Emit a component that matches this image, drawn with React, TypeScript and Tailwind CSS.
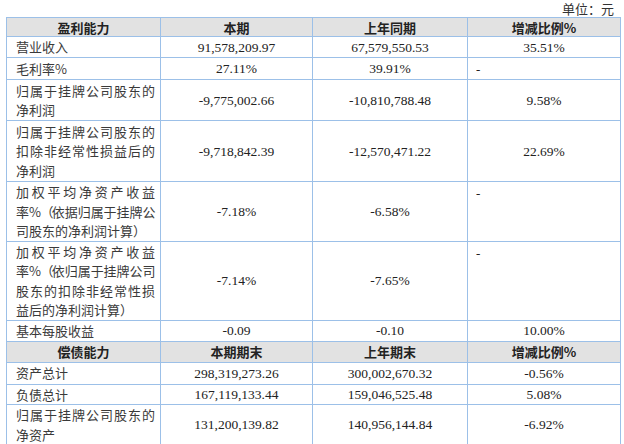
import React from "react";

type Row =
  | { kind: "head"; cells: string[]; h: number }
  | { kind: "data"; label: string[]; v: string[]; h: number; dashTop?: boolean };

const rows: Row[] = [
  { kind: "head", cells: ["盈利能力", "本期", "上年同期", "增减比例%"], h: 19 },
  { kind: "data", label: ["营业收入"], v: ["91,578,209.97", "67,579,550.53", "35.51%"], h: 21 },
  { kind: "data", label: ["毛利率%"], v: ["27.11%", "39.91%", "-"], h: 21, dashTop: true },
  { kind: "data", label: ["归属于挂牌公司股东的", "净利润"], v: ["-9,775,002.66", "-10,810,788.48", "9.58%"], h: 41 },
  {
    kind: "data",
    label: ["归属于挂牌公司股东的", "扣除非经常性损益后的", "净利润"],
    v: ["-9,718,842.39", "-12,570,471.22", "22.69%"],
    h: 61,
  },
  {
    kind: "data",
    label: ["加权平均净资产收益", "率%（依据归属于挂牌公", "司股东的净利润计算）"],
    v: ["-7.18%", "-6.58%", "-"],
    h: 59,
    dashTop: true,
  },
  {
    kind: "data",
    label: ["加权平均净资产收益", "率%（依归属于挂牌公司", "股东的扣除非经常性损", "益后的净利润计算）"],
    v: ["-7.14%", "-7.65%", "-"],
    h: 79,
    dashTop: true,
  },
  { kind: "data", label: ["基本每股收益"], v: ["-0.09", "-0.10", "10.00%"], h: 21 },
  { kind: "head", cells: ["偿债能力", "本期期末", "上年期末", "增减比例%"], h: 21 },
  { kind: "data", label: ["资产总计"], v: ["298,319,273.26", "300,002,670.32", "-0.56%"], h: 22 },
  { kind: "data", label: ["负债总计"], v: ["167,119,133.44", "159,046,525.48", "5.08%"], h: 20 },
  { kind: "data", label: ["归属于挂牌公司股东的", "净资产"], v: ["131,200,139.82", "140,956,144.84", "-6.92%"], h: 38 },
  { kind: "data", label: ["归属于挂牌公司股东的", "每股净资产"], v: ["2.19", "2.35", "-6.81%"], h: 41 },
];

const cjk = "font-['Noto_Sans_CJK_SC',sans-serif]";
const num = "font-['Liberation_Serif','Noto_Sans_CJK_SC',serif]";
const bd = "border-[1.5px] border-[#9cc0e8]";

function Label({ text, last }: { text: string; last: boolean }) {
  const tight = text.includes("（");
  const parts = text.split("（");
  return (
    <div
      className={
        (last ? "text-left" : "text-justify [text-align-last:justify]") +
        " whitespace-nowrap overflow-visible" +
        (tight ? " tracking-[-0.4px]" : "")
      }
    >
      {tight ? (
        <>
          {parts[0]}
          <span className="inline-block w-[11px] text-right">（</span>
          {parts[1]}
        </>
      ) : (
        text
      )}
    </div>
  );
}

export default function App() {
  return (
    <div className="w-[624px] h-[444px] overflow-hidden bg-white relative">
      <div className={`flex justify-end pr-[10px] pt-[1px] h-[17px] text-[13px] leading-[16px] text-[#333] ${cjk}`}>
        单位：元
      </div>
      <table className="ml-[6px] border-collapse table-fixed w-[614px]">
        <colgroup>
          <col className="w-[154px]" />
          <col className="w-[152px]" />
          <col className="w-[155px]" />
          <col className="w-[153px]" />
        </colgroup>
        <tbody>
          {rows.map((r, i) =>
            r.kind === "head" ? (
              <tr key={i} style={{ height: r.h }} className="bg-[#e2e2e2]">
                {r.cells.map((c, j) => (
                  <td
                    key={j}
                    className={`${bd} p-0 text-center align-middle text-[13px] leading-[17px] font-bold text-[#222] ${cjk}`}
                  >
                    {c}
                  </td>
                ))}
              </tr>
            ) : (
              <tr key={i} style={{ height: r.h }}>
                <td className={`${bd} pl-[9px] pr-[5px] py-0 align-middle text-[13px] leading-[19.5px] text-[#3a3a3a] ${cjk}`}>
                  {r.label.map((l, k) => (
                    <Label key={k} text={l} last={k === r.label.length - 1} />
                  ))}
                </td>
                {r.v.map((v, j) =>
                  v === "-" && r.dashTop ? (
                    <td
                      key={j}
                      className={`${bd} pl-[8px] pt-[2px] pb-0 align-top text-left text-[13px] leading-[19px] text-[#222] ${num}`}
                    >
                      -
                    </td>
                  ) : (
                    <td
                      key={j}
                      className={`${bd} p-0 align-middle text-center text-[13.5px] leading-[19px] text-[#222] ${num}`}
                    >
                      {v}
                    </td>
                  )
                )}
              </tr>
            )
          )}
        </tbody>
      </table>
    </div>
  );
}
